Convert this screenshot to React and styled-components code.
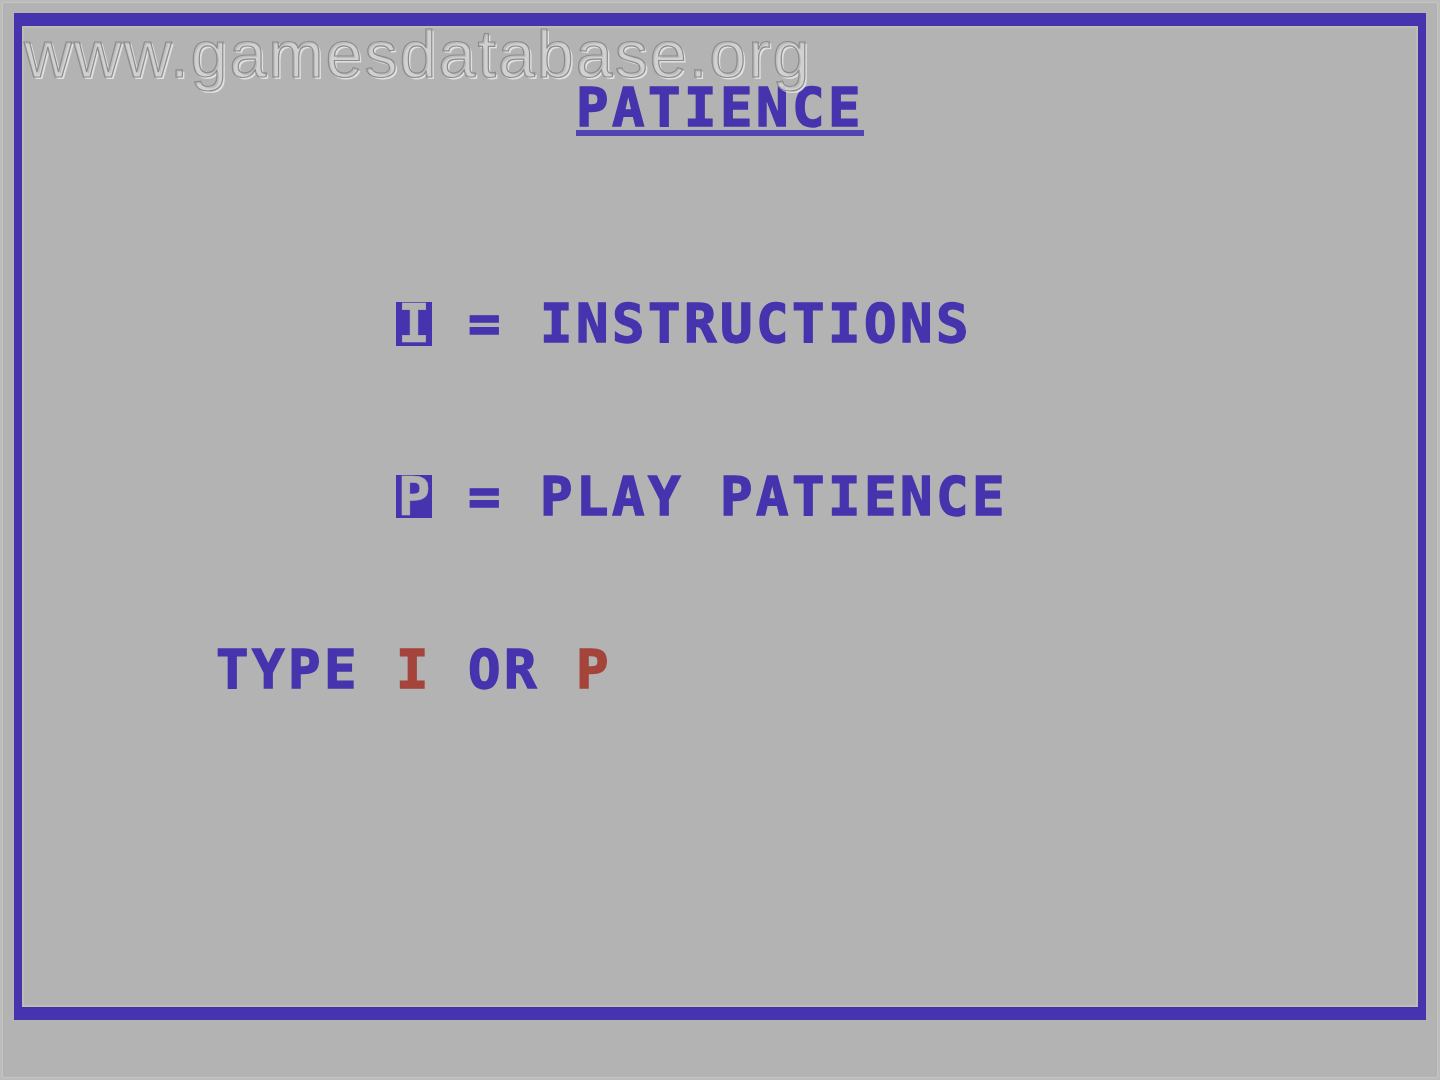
import React from "react";
import styled, { createGlobalStyle } from "styled-components";

const BLUE = "#4534ad";
const RED = "#a4443a";
const GREY = "#b3b3b3";

const Global = createGlobalStyle`
  html, body { margin: 0; padding: 0; background: ${GREY}; }
  body { width: 1440px; height: 1080px; overflow: hidden; }
`;

const Page = styled.div`
  position: relative;
  width: 1440px;
  height: 1080px;
  background: ${GREY};
  box-shadow: inset 0 0 0 2px #bcbcbc, inset 0 0 0 3px #c4c4c4;
  overflow: hidden;
`;

const Screen = styled.div`
  display: grid;
  grid-template-columns: repeat(40, 36px);
  grid-template-rows: repeat(25, 43.2px);
  width: 1440px;
  height: 1080px;
  filter: blur(0.6px);
`;

const Frame = styled.div`
  grid-column: 1 / 41;
  grid-row: 1 / 25;
  margin: 13px 14px 17px 14px;
  border-style: solid;
  border-color: ${BLUE};
  border-width: 13px 8px 13px 8px;
  box-shadow: inset 0 0 0 2px #bdbdb6;
`;

const Line = styled.div`
  grid-row: ${(p) => p.$row};
  grid-column: ${(p) => p.$col} / -1;
  align-self: start;
  white-space: pre;
  font-family: "DejaVu Sans Mono", "Liberation Mono", monospace;
  font-weight: bold;
  font-size: 54px;
  line-height: 43.2px;
  height: 43.2px;
  letter-spacing: calc(36px - 0.602em);
  color: ${BLUE};
  -webkit-text-stroke: 1.4px currentColor;
`;

const Underline = styled.div`
  grid-row: ${(p) => p.$row};
  grid-column: ${(p) => p.$col} / span ${(p) => p.$span};
  align-self: start;
  height: 6px;
  background: #5243b4;
`;

const Key = styled.span`
  display: inline-block;
  width: 36px;
  height: 43.2px;
  vertical-align: top;
  text-align: center;
  letter-spacing: 0;
  background: ${BLUE};
  color: ${GREY};
  -webkit-text-stroke: 0.6px currentColor;
`;

const Hot = styled.span`
  color: ${RED};
`;

const Watermark = styled.div`
  position: absolute;
  left: 24px;
  top: 21px;
  font-family: "Liberation Sans", Arial, sans-serif;
  font-size: 66px;
  line-height: 1;
  letter-spacing: 2.2px;
  color: rgba(196, 196, 196, 0.55);
  -webkit-text-stroke: 1.2px #8c8c8c;
  text-shadow: 2px 2px 0 rgba(235, 235, 235, 0.8);
  white-space: nowrap;
  pointer-events: none;
`;

export default function App() {
  return (
    <>
      <Global />
      <Page>
        <Screen>
          <Frame />
          <Line $row={3} $col={17}>PATIENCE</Line>
          <Underline $row={4} $col={17} $span={8} />
          <Line $row={8} $col={12}>
            <Key>I</Key>{" = INSTRUCTIONS"}
          </Line>
          <Line $row={12} $col={12}>
            <Key>P</Key>{" = PLAY PATIENCE"}
          </Line>
          <Line $row={16} $col={7}>
            {"TYPE "}
            <Hot>I</Hot>
            {" OR "}
            <Hot>P</Hot>
          </Line>
        </Screen>
        <Watermark>www.gamesdatabase.org</Watermark>
      </Page>
    </>
  );
}
